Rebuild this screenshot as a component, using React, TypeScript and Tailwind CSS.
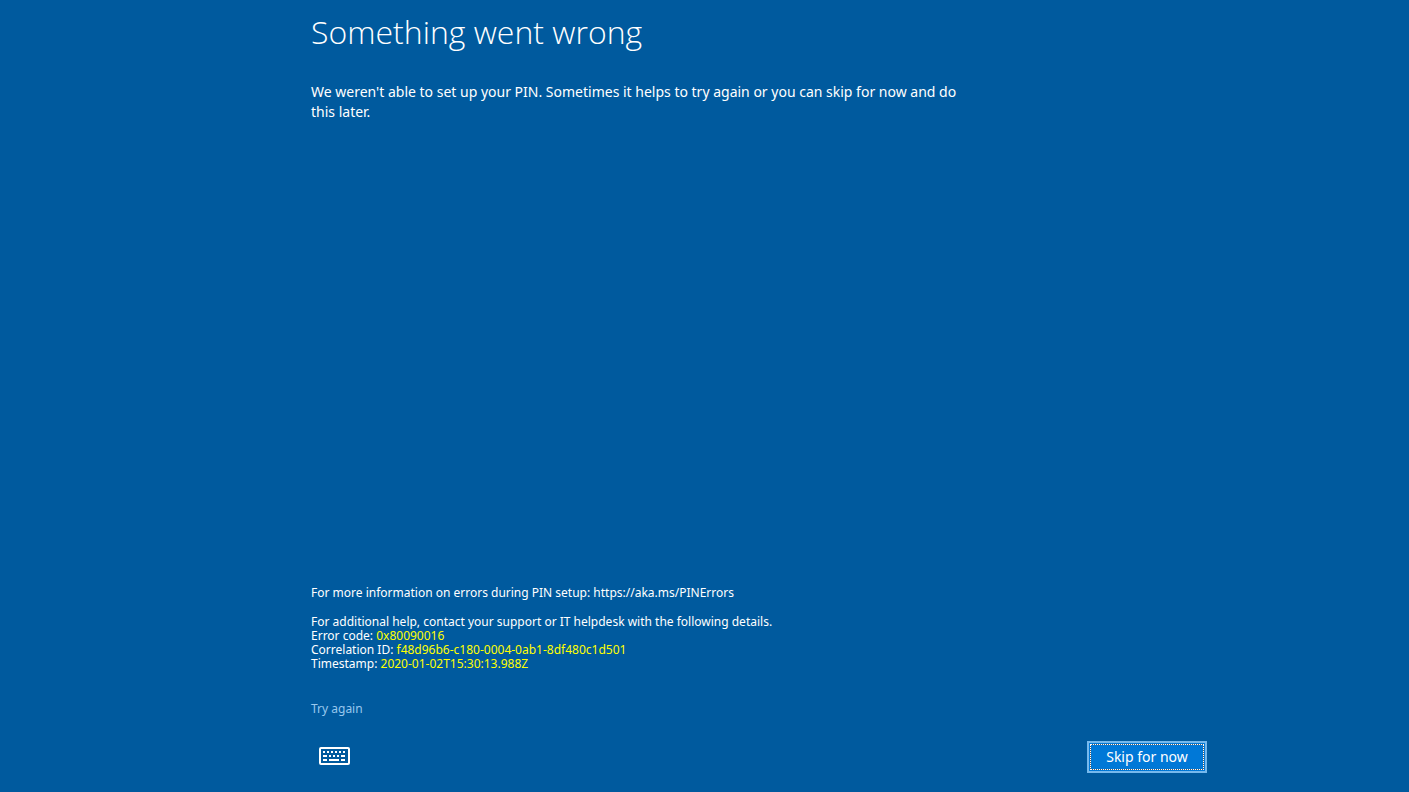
import React from "react";

const errorDetails = [
  { label: "Error code:", value: "0x80090016" },
  { label: "Correlation ID:", value: "f48d96b6-c180-0004-0ab1-8df480c1d501" },
  { label: "Timestamp:", value: "2020-01-02T15:30:13.988Z" },
];

const KeyboardIcon: React.FC = () => (
  <svg
    width="32"
    height="20"
    viewBox="0 1 32 20"
    fill="currentColor"
    shapeRendering="crispEdges"
    aria-hidden="true"
  >
    <rect
      x="1"
      y="2"
      width="29"
      height="16"
      rx="1"
      fill="none"
      stroke="currentColor"
      strokeWidth="2"
      shapeRendering="auto"
    />
    {/* top row of keys */}
    {[4, 8, 12, 16, 20, 24].map((x) => (
      <rect key={x} x={x} y="5" width="2" height="2" />
    ))}
    {/* middle row */}
    <rect x="4" y="9" width="4" height="2" />
    {[10, 14, 18].map((x) => (
      <rect key={x} x={x} y="9" width="2" height="2" />
    ))}
    <rect x="22" y="9" width="4" height="2" />
    {/* bottom row with the space bar */}
    <rect x="4" y="13" width="4" height="2" />
    <rect x="10" y="13" width="10" height="2" />
    <rect x="22" y="13" width="4" height="2" />
  </svg>
);

export default function App() {
  return (
    <div className="min-h-screen bg-[#005a9e] px-6 font-['Noto_Sans','Open_Sans',sans-serif] text-white lg:pl-[311px]">
      <main className="flex min-h-screen max-w-4xl flex-col pt-2 pb-[19px]">
        <h1 className="font-['Open_Sans','Noto_Sans',sans-serif] text-[32px] leading-12 font-light">
          Something went wrong
        </h1>
        <p className="mt-[26px] max-w-[660px] text-sm leading-5">
          We weren't able to set up your PIN. Sometimes it helps to try again or
          you can skip for now and do this later.
        </p>

        <section className="mt-auto text-xs leading-[14px]">
          <p>
            For more information on errors during PIN setup:
            https://aka.ms/PINErrors
          </p>
          <p className="mt-[15px]">
            For additional help, contact your support or IT helpdesk with the
            following details.
          </p>
          {errorDetails.map(({ label, value }) => (
            <p key={label}>
              {label} <span className="text-[#ffff00]">{value}</span>
            </p>
          ))}
        </section>

        <a
          href="#retry"
          className="mt-7 self-start text-xs leading-5 text-[#99c8ee]"
        >
          Try again
        </a>

        <div className="mt-[22px] flex items-center justify-between">
          <button type="button" aria-label="Keyboard" className="pl-2">
            <KeyboardIcon />
          </button>
          <button
            type="button"
            className="h-8 w-[120px] border-2 border-[#76b9ed] bg-[#0078d7] p-px text-sm"
          >
            {/* focus rectangle: white dots over a dark line */}
            <span className="flex h-full border border-dotted border-white bg-[#5c5f63]">
              <span className="flex flex-1 items-center justify-center bg-[#0078d7]">
                Skip for now
              </span>
            </span>
          </button>
        </div>
      </main>
    </div>
  );
}
